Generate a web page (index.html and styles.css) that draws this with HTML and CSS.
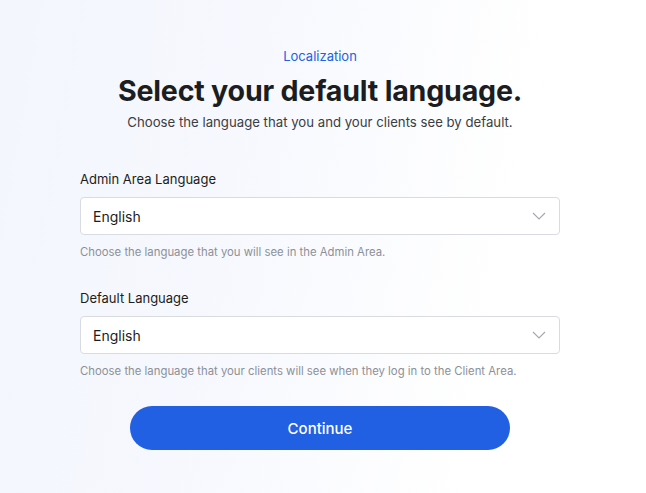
FILE: index.html
```html
<!DOCTYPE html>
<html lang="en">
<head>
  <meta charset="UTF-8">
  <meta name="viewport" content="width=device-width, initial-scale=1.0">
  <title>Select your default language</title>
  <link rel="stylesheet" href="styles.css">
</head>
<body>
  <div class="page">
    <div class="step">Localization</div>
    <h1>Select your default language.</h1>
    <p class="lead">Choose the language that you and your clients see by default.</p>

    <div class="field">
      <label>Admin Area Language</label>
      <div class="select">
        <span>English</span>
        <svg width="14" height="8" viewBox="0 0 14 8"><path d="M1 1l6 6 6-6" fill="none" stroke="#a3a7ae" stroke-width="1.1"/></svg>
      </div>
      <div class="help">Choose the language that you will see in the Admin Area.</div>
    </div>

    <div class="field">
      <label>Default Language</label>
      <div class="select">
        <span>English</span>
        <svg width="14" height="8" viewBox="0 0 14 8"><path d="M1 1l6 6 6-6" fill="none" stroke="#a3a7ae" stroke-width="1.1"/></svg>
      </div>
      <div class="help">Choose the language that your clients will see when they log in to the Client Area.</div>
    </div>

    <button class="continue">Continue</button>
  </div>
</body>
</html>
```

FILE: styles.css
```css
html, body {
  margin: 0;
  height: 100%;
}
body {
  font-family: Inter, "Noto Sans", sans-serif;
  color: #1b1d21;
  background: linear-gradient(100deg, #f3f6fd 0%, #f6f8fe 35%, #ffffff 75%);
  padding-right: 6px;
}
.page {
  width: 480px;
  margin: 0 auto;
  padding-top: 47px;
  text-align: center;
}
.step {
  font-size: 13px;
  color: #2160e3;
  line-height: 18px;
}
h1 {
  margin: 9px 0 0;
  font-size: 28.6px;
  font-weight: 700;
  line-height: 34px;
  letter-spacing: -0.2px;
}
.lead {
  margin: 5px 0 0;
  font-size: 13.2px;
  line-height: 18px;
  color: #3a3d43;
}
.field {
  text-align: left;
  margin-top: 39px;
}
.field + .field {
  margin-top: 29px;
}
.field label {
  display: block;
  font-size: 13px;
  line-height: 18px;
  margin-bottom: 9px;
}
.select {
  height: 38px;
  box-sizing: border-box;
  background: #fff;
  border: 1px solid #d8dbe1;
  border-radius: 4px;
  display: flex;
  align-items: center;
  justify-content: space-between;
  padding: 0 13px 0 12px;
  font-size: 14px;
}
.help {
  margin-top: 10px;
  font-size: 11.35px;
  line-height: 15px;
  color: #8c9098;
}
.continue {
  display: block;
  width: 380px;
  height: 44px;
  margin: 27px auto 0;
  border: none;
  border-radius: 22px;
  background: #2160e3;
  color: #fff;
  font-family: inherit;
  font-size: 15px;
  font-weight: 500;
  cursor: pointer;
}
```
